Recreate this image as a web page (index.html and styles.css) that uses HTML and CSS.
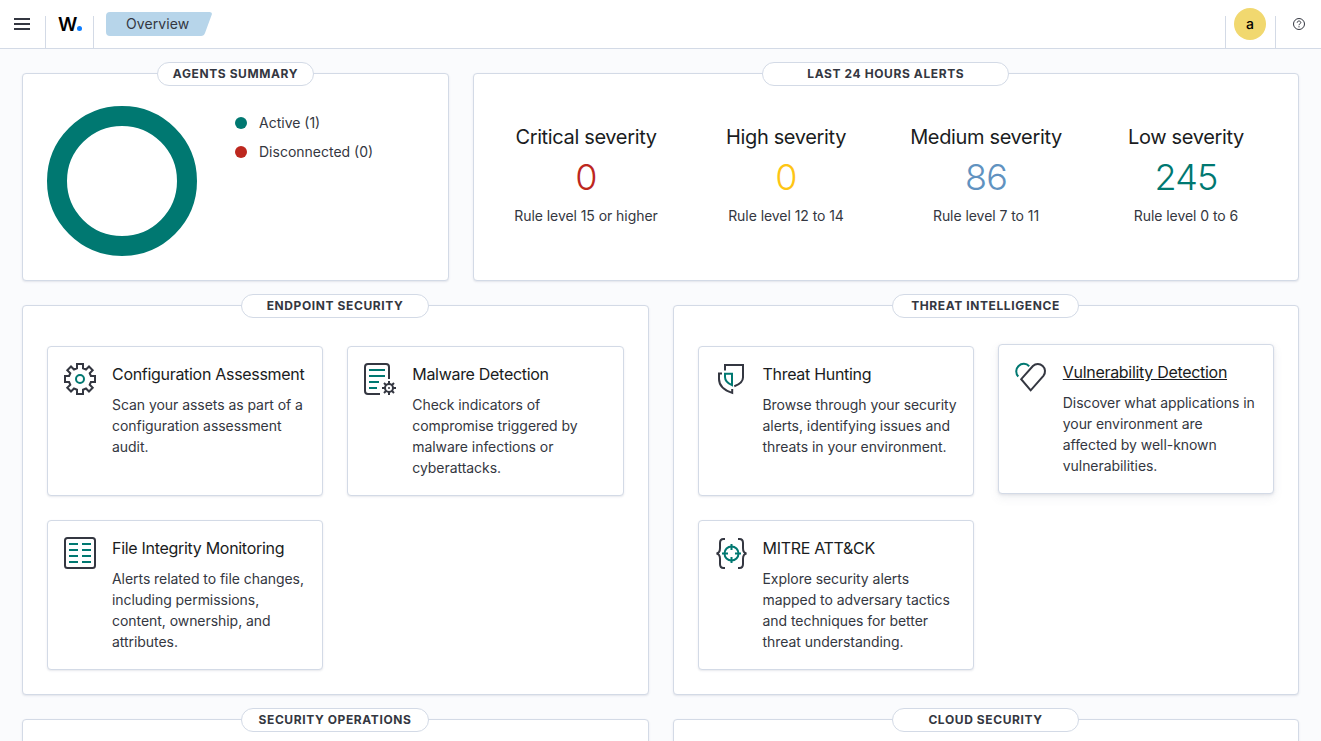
FILE: index.html
```html
<!DOCTYPE html>
<html lang="en">
<head>
<meta charset="utf-8">
<title>Overview</title>
<link rel="stylesheet" href="styles.css">
</head>
<body>
<header class="header">
  <div class="header-section menu">
    <svg width="16" height="16" viewBox="0 0 16 16"><path d="M0 2h16v2H0zM0 7h16v2H0zM0 12h16v2H0z"/></svg>
  </div>
  <div class="header-section brand"><span class="brand-w">W</span><span class="brand-dot"></span></div>
  <div class="header-section crumbs">
    <div class="crumb">
      <svg class="crumb-shape" width="106" height="24" viewBox="0 0 106 24"><path d="M4 0h99.500q3 0 2.300 2.500L99 21q-1 3-4 3H4q-4 0-4-4V4q0-4 4-4z"/></svg>
      <span class="crumb-text">Overview</span>
    </div>
  </div>
  <div class="header-section user"><span class="avatar">a</span></div>
  <div class="header-section help">
    <svg width="12" height="12" viewBox="0 0 12 12" fill="none" stroke="#343741"><circle cx="6" cy="6" r="5.500"/><path d="M4.200 4.700C4.200 3.600 5 3 6 3s1.800.7 1.800 1.600C7.800 5.800 6 5.700 6 7.200M6 8.200v1.200"/></svg>
  </div>
</header>
<main class="page">
  <div class="row summary">
    <section class="panel">
      <h2 class="pill pill-agents">Agents summary</h2>
      <div class="agents">
        <svg width="150" height="150" viewBox="0 0 150 150"><circle cx="75" cy="75" r="65" fill="none" stroke="#007871" stroke-width="20"/></svg>
        <ul class="legend">
          <li><i class="dot dot-active"></i>Active (1)</li>
          <li><i class="dot dot-off"></i>Disconnected (0)</li>
        </ul>
      </div>
    </section>
    <section class="panel">
      <h2 class="pill pill-alerts">Last 24 hours alerts</h2>
      <div class="stats">
        <div class="stat"><h3>Critical severity</h3><p class="num critical">0</p><p class="rule">Rule level 15 or higher</p></div>
        <div class="stat"><h3>High severity</h3><p class="num high">0</p><p class="rule">Rule level 12 to 14</p></div>
        <div class="stat"><h3>Medium severity</h3><p class="num medium">86</p><p class="rule">Rule level 7 to 11</p></div>
        <div class="stat"><h3>Low severity</h3><p class="num low">245</p><p class="rule">Rule level 0 to 6</p></div>
      </div>
    </section>
  </div>
  <div class="row apps">
    <section class="panel">
      <h2 class="pill">Endpoint security</h2>
      <div class="cards">
        <article class="card">
          <svg class="icon" viewBox="0 0 32 32"><path d="M13 1h6v4.300l3 1.200 3-3L28.700 7.200l-3 3 1.200 2.800H31v6h-4.100l-1.200 2.800 3 3-3.700 3.700-3-3-3 1.200V31h-6v-4.300l-3-1.200-3 3-3.700-3.700 3-3L5.100 19H1v-6h4.100l1.200-2.800-3-3L7 3.500l3 3 3-1.200z"/><circle class="accent" cx="16" cy="16" r="4"/></svg>
          <div class="card-body"><h3>Configuration Assessment</h3><p>Scan your assets as part of a configuration assessment audit.</p></div>
        </article>
        <article class="card">
          <svg class="icon" viewBox="0 0 32 32"><path d="M16 31H4a3 3 0 0 1-3-3V4a3 3 0 0 1 3-3h18a3 3 0 0 1 3 3v12"/><path class="accent" d="M5 7h16M5 13h16M5 19h10M5 25h8"/><g><circle cx="25" cy="25" r="4"/><path d="M25 18v3M25 29v3M18 25h3M29 25h3M20 20l2.200 2.200M27.800 27.800L30 30M20 30l2.200-2.200M27.800 22.200L30 20"/><circle cx="25" cy="25" r="1" stroke="none" fill="#343741"/></g></svg>
          <div class="card-body"><h3>Malware Detection</h3><p>Check indicators of compromise triggered by malware infections or cyberattacks.</p></div>
        </article>
        <article class="card">
          <svg class="icon" viewBox="0 0 32 32"><rect x="1" y="1" width="30" height="30" rx="2.500"/><path class="accent" d="M5 7h9M18 7h9M5 13h9M18 13h9M5 19h9M18 19h9M5 25h9M18 25h9"/></svg>
          <div class="card-body"><h3>File Integrity Monitoring</h3><p>Alerts related to file changes, including permissions, content, ownership, and attributes.</p></div>
        </article>
      </div>
    </section>
    <section class="panel">
      <h2 class="pill">Threat intelligence</h2>
      <div class="cards">
        <article class="card">
          <svg class="icon" viewBox="0 0 32 32"><path d="M10 7.500V2h18v12.500c0 4-3.300 6.800-8.700 8.700M7 10.500H4V16c0 6.500 4.500 11 13.200 13.900V26"/><path class="accent" d="M10 10.700h7v11.500C12 20 10 17.500 10 14z"/></svg>
          <div class="card-body"><h3>Threat Hunting</h3><p>Browse through your security alerts, identifying issues and threats in your environment.</p></div>
        </article>
        <article class="card card-hover">
          <svg class="icon" viewBox="0 0 32 32"><path class="accent" d="M3.300 15.500A7.300 7.300 0 0 1 14.200 5.200"/><path d="M15.700 29.300L6.200 18.200 17.900 5A7.200 7.200 0 0 1 28.400 14.800z"/></svg>
          <div class="card-body"><h3>Vulnerability Detection</h3><p>Discover what applications in your environment are affected by well-known vulnerabilities.</p></div>
        </article>
        <article class="card">
          <svg class="icon" viewBox="0 0 32 32"><path d="M10 2H8.500Q5 2 5 6v5q0 5-3.500 5.500Q5 17 5 22v5q0 4 3.500 4H10M23 2h1.500Q28 2 28 6v5q0 5 3.500 5.500Q28 17 28 22v5q0 4-3.500 4H23"/><circle class="accent" cx="16.500" cy="16.500" r="7"/><path class="accent" d="M16.500 7v6M16.500 20v6M7 16.500h6M20 16.500h6"/></svg>
          <div class="card-body"><h3>MITRE ATT&amp;CK</h3><p>Explore security alerts mapped to adversary tactics and techniques for better threat understanding.</p></div>
        </article>
      </div>
    </section>
  </div>
  <div class="row apps next">
    <section class="panel"><h2 class="pill">Security operations</h2></section>
    <section class="panel"><h2 class="pill">Cloud security</h2></section>
  </div>
</main>
</body>
</html>
```

FILE: styles.css
```css
* { box-sizing: border-box; }
body, h2, h3, p, ul { margin: 0; padding: 0; }
body {
  height: 741px;
  overflow: hidden;
  background: #fafbfd;
  color: #343741;
  font: 400 14px/21px Inter, "Liberation Sans", sans-serif;
}
svg { display: block; flex: none; }

.header {
  display: flex;
  height: 49px;
  background: #fff;
  border-bottom: 1px solid #d3dae6;
}
.header-section { display: flex; align-items: center; height: 48px; }
.menu { width: 45px; padding-left: 14px; fill: #343741; }
.brand, .crumbs, .help {
  background: linear-gradient(#d3dae6, #d3dae6) 0 16px / 1px 32px no-repeat;
}
.brand { width: 48px; padding-left: 13px; align-items: baseline; }
.brand-w { font-size: 19px; line-height: 49px; font-weight: 600; letter-spacing: -.3px; color: #000; }
.brand-dot { width: 5px; height: 5px; border-radius: 50%; background: #0a7cff; }
.crumbs { flex: 1; padding-left: 13px; }
.crumb { display: grid; width: 106px; height: 24px; }
.crumb-shape, .crumb-text { grid-area: 1 / 1; }
.crumb-shape { fill: #b7d5ea; }
.crumb-text { padding-left: 20px; line-height: 24px; z-index: 1; letter-spacing: .1px; }
.user {
  width: 50px;
  padding-left: 9px;
  background: linear-gradient(#d3dae6, #d3dae6) 0 16px / 1px 32px no-repeat;
}
.avatar {
  width: 32px;
  height: 32px;
  border-radius: 50%;
  background: #f1d86f;
  color: #000;
  font-weight: 500;
  line-height: 32px;
  text-align: center;
}
.help { width: 46px; padding-left: 18px; }

.page { height: 692px; overflow: hidden; padding: 24px 22px 0; }
.row { display: grid; gap: 24px; margin-bottom: 24px; }
.summary { grid-template-columns: 427px 1fr; }
.summary .panel { height: 208px; }
.apps { grid-template-columns: 1fr 1fr; }
.apps .panel { height: 390px; }
.panel {
  display: flex;
  flex-direction: column;
  background: #fff;
  border: 1px solid #d3dae6;
  border-radius: 4px;
  box-shadow: 0 1px 2px rgba(105, 115, 140, .16);
}
.pill {
  align-self: center;
  width: 187.5px;
  height: 24px;
  margin-top: -12px;
  margin-right: .5px;
  border: 1px solid #d3dae6;
  border-radius: 12px;
  background: #fff;
  font-size: 12px;
  line-height: 22px;
  font-weight: 700;
  letter-spacing: .6px;
  text-align: center;
  text-transform: uppercase;
  white-space: nowrap;
}
.pill-agents { width: 157px; margin-right: 0; }
.pill-alerts { width: 247px; }

.agents { display: flex; padding: 20px 24px; }
.legend { list-style: none; padding: 6px 0 0 38px; }
.legend li { display: flex; align-items: center; height: 21px; margin-bottom: 8px; }
.dot { width: 12px; height: 12px; margin-right: 12px; border-radius: 50%; }
.dot-active { background: #007871; }
.dot-off { background: #bd271e; }

.stats {
  display: grid;
  grid-template-columns: repeat(4, 1fr);
  gap: 24px;
  padding: 39px 24px 0;
  text-align: center;
}
.stat h3 { font-size: 20px; line-height: 24px; font-weight: 400; letter-spacing: -.35px; color: #1a1c21; white-space: nowrap; }
.num { font-size: 36px; line-height: 40px; font-weight: 350; letter-spacing: -.8px; margin: 8px 0; }
.rule { letter-spacing: -.06px; }
.critical { color: #bd271e; }
.high { color: #fec514; }
.medium { color: #6092c0; }
.low { color: #007871; }

.cards {
  display: grid;
  grid-template-columns: repeat(2, minmax(0, 1fr));
  grid-auto-rows: 150px;
  gap: 24px;
  padding: 28px 24px 0;
}
.card {
  display: flex;
  gap: 16px;
  padding: 16px;
  border: 1px solid #d3dae6;
  border-radius: 4px;
  background: #fff;
  box-shadow: 0 1px 2px rgba(105, 115, 140, .16);
}
.card-hover {
  transform: translateY(-2px);
  box-shadow: 0 1px 3px rgba(105, 115, 140, .16), 0 4px 10px rgba(105, 115, 140, .1);
}
.card-hover h3 { text-decoration: underline; }
.card-body { flex: 1; min-width: 0; margin-top: -1px; }
.card h3 {
  margin-bottom: 8px;
  font-size: 16px;
  line-height: 24px;
  font-weight: 400;
  letter-spacing: -.3px;
  color: #1a1c21;
  white-space: nowrap;
}
.card p { letter-spacing: -.05px; }
.icon { width: 32px; height: 32px; fill: none; stroke: #343741; stroke-width: 2; }
.accent { stroke: #007871; }
```
